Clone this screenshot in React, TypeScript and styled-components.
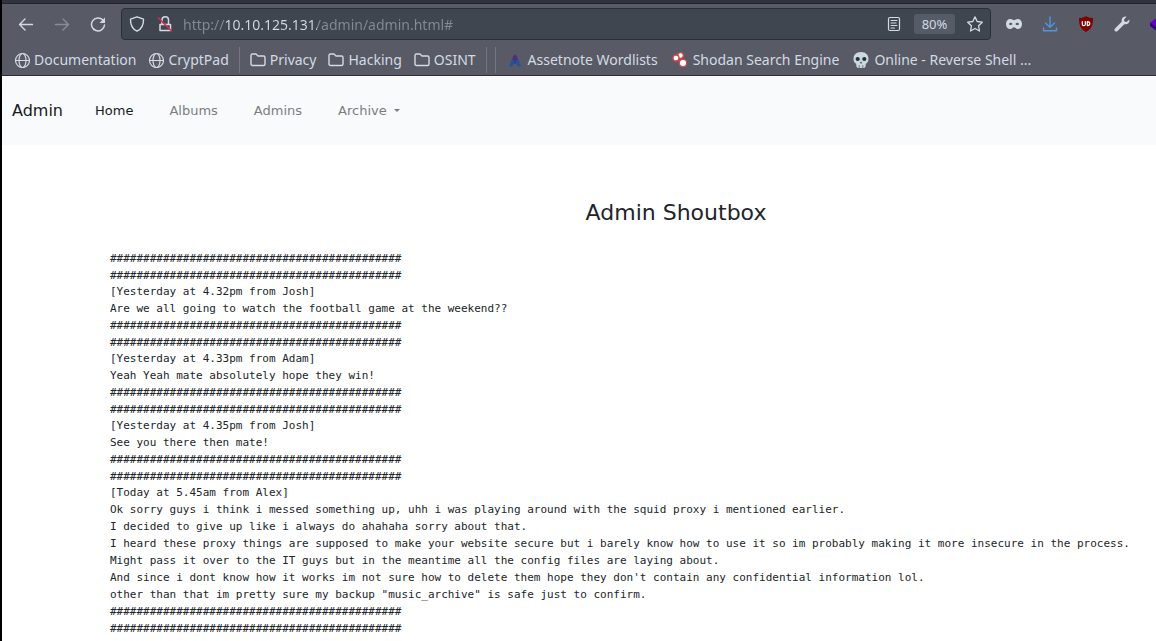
import React from 'react';
import styled, { createGlobalStyle, css } from 'styled-components';

const GlobalStyle = createGlobalStyle`
  *, *::before, *::after { box-sizing: border-box; }
  body { margin: 0; background: #fff; overflow: hidden; }
`;

const uiFont = css`
  font-family: 'Noto Sans', sans-serif;
`;

const Window = styled.div`
  min-height: 100vh;
  border-left: 2px solid #000;
  overflow: hidden;
`;

const Chrome = styled.header`
  ${uiFont}
  color: #d3dae3;
  background: #585a66;
  border-bottom: 1px solid #35283f;
`;

const TabStrip = styled.div`
  height: 4px;
  background: #2f343f;
  border-bottom: 1px solid #1f232b;
`;

const Toolbar = styled.div`
  display: flex;
  align-items: center;
  height: 40px;
  padding-left: 6px;
`;

const ToolButton = styled.button<{ $dim?: boolean; $clipped?: boolean }>`
  display: flex;
  flex: none;
  align-items: center;
  justify-content: ${p => (p.$clipped ? 'flex-start' : 'center')};
  width: ${p => (p.$clipped ? 16 : 36)}px;
  height: 32px;
  padding: 0 0 0 ${p => (p.$clipped ? 10 : 0)}px;
  border: 0;
  background: none;
  color: inherit;
  opacity: ${p => (p.$dim ? 0.4 : 1)};
  overflow: hidden;

  svg { flex: none; }
`;

const AddressBar = styled.form`
  display: flex;
  flex: 1;
  align-items: center;
  min-width: 0;
  height: 32px;
  margin: 0 5px;
  padding: 0 1px;
  border: 1px solid #2a2e39;
  border-radius: 4px;
  background: #3f4650;
`;

const FieldButton = styled.button`
  display: flex;
  flex: none;
  align-items: center;
  justify-content: center;
  width: 28px;
  height: 28px;
  padding: 0;
  border: 0;
  background: none;
  color: inherit;
`;

const AddressInput = styled.input`
  ${uiFont}
  flex: 1;
  min-width: 0;
  height: 28px;
  margin: 0 0 0 4px;
  padding: 0;
  border: 0;
  outline: 0;
  font-size: 14px;
  color: transparent;
  background: linear-gradient(to right, #858a93 41px, #d3dae3 41px 134px, #858a93 134px);
  background-clip: text;
  -webkit-background-clip: text;
`;

const ZoomButton = styled.button`
  ${uiFont}
  flex: none;
  width: 41px;
  height: 20px;
  margin: 0 6px;
  padding: 0;
  border: 0;
  border-radius: 3px;
  background: #565b68;
  color: #d3dae3;
  font-size: 13px;
  line-height: 20px;
`;

const BookmarkBar = styled.nav`
  display: flex;
  align-items: center;
  height: 31px;
  padding-left: 6px;
`;

const Bookmark = styled.a<{ $favicon?: boolean }>`
  display: flex;
  flex: none;
  align-items: center;
  gap: ${p => (p.$favicon ? 5 : 4)}px;
  padding: 0 ${p => (p.$favicon ? 7 : 6)}px;
  color: inherit;
  font-size: 14px;
  line-height: 24px;
  text-decoration: none;
  white-space: nowrap;

  svg { flex: none; }
`;

const BookmarkDivider = styled.span`
  flex: none;
  width: 1px;
  height: 26px;
  margin: 0 4px;
  background: #757683;
`;

const SiteNav = styled.nav`
  display: flex;
  align-items: center;
  min-height: 69px;
  padding: 0 10px;
  background: #f8fafc;
  font-family: 'DejaVu Sans', sans-serif;
`;

const Brand = styled.a`
  margin-right: 14px;
  color: #1a1b1c;
  font-size: 16px;
  line-height: 24px;
  text-decoration: none;
`;

const NavList = styled.ul`
  display: flex;
  margin: 0;
  padding: 0;
  list-style: none;
`;

const NavLink = styled.a<{ $active?: boolean }>`
  display: flex;
  align-items: center;
  gap: 7px;
  padding: 0 18px;
  color: ${p => (p.$active ? '#1a1b1c' : '#7c7d7e')};
  font-size: 13px;
  line-height: 20px;
  text-decoration: none;
`;

const Caret = styled.span`
  border: 3px solid transparent;
  border-top-color: currentColor;
  border-bottom: 0;
`;

const Main = styled.main`
  padding: 52px 0 0 108px;
  color: #212529;
`;

const Title = styled.h1`
  margin: 0 -86px 21px 0;
  font-family: 'DejaVu Sans', sans-serif;
  font-size: 22px;
  font-weight: 400;
  line-height: 32px;
  text-align: center;
`;

const monoText = css`
  font-family: 'DejaVu Sans Mono', monospace;
  font-size: 11px;
  line-height: 17px;
  white-space: pre;
`;

const Message = styled.article`
  ${monoText}
`;

const Rule = styled.div`
  ${monoText}
  margin-bottom: -1px;
`;

const Icon = ({ size = 16, children }: { size?: number; children: React.ReactNode }) => (
  <svg width={size} height={size} viewBox="0 0 16 16" fill="none" stroke="currentColor" strokeWidth="1.2" strokeLinecap="round" strokeLinejoin="round" aria-hidden="true">
    {children}
  </svg>
);

const Back = () => <Icon><path d="M14.5 8.500H1.500M7 3 1.500 8.500 7 14" strokeWidth="1.4" /></Icon>;
const Forward = () => <Icon><path d="M1.500 8.500h13M9 3l5.500 5.500L9 14" strokeWidth="1.4" /></Icon>;
const Reload = () => (
  <Icon>
    <path d="M12.800 4A6.500 6.500 0 1 0 14.500 9" strokeWidth="1.500" />
    <path d="M15 1.500v5.500H9.500z" fill="currentColor" stroke="none" />
  </Icon>
);
const Shield = () => <Icon><path d="M8 .8 14.500 3.200C14.700 8.800 12.500 13 8 15.200 3.500 13 1.300 8.800 1.500 3.200z" strokeWidth="1.400" /></Icon>;
const Lock = () => (
  <Icon>
    <path d="M3 8.500h10.500v6H3zM5 8.500V4a3.200 3.200 0 0 1 6.500 0v4.500" strokeWidth="1.500" />
    <path d="M1.500 2 14.500 15" stroke="#e22850" strokeWidth="1.500" />
  </Icon>
);
const Reader = () => <Icon><rect x="2.500" y="1.500" width="11" height="13" rx="1.500" /><path d="M5 4.500h6M5 7h5M5 9.500h6M5 12h3.500" strokeWidth="1.100" /></Icon>;
const Star = () => <Icon><path d="m8 .9 2.200 4.600 5.100.7-3.700 3.600.9 5.200L8 12.500 3.500 15l.9-5.200L.7 6.200l5.100-.7z" strokeWidth="1.300" /></Icon>;
const Mask = () => (
  <Icon>
    <path fillRule="evenodd" d="M0 8c0-3 1.700-5 4.300-5C6 3 6.800 4.200 8 4.200S10 3 11.700 3C14.300 3 16 5 16 8s-1.700 5-4.300 5c-1.900 0-2.500-1.700-3.700-1.700S6.200 13 4.300 13C1.700 13 0 11 0 8zM3 8c.6 1.600 2.800 1.600 3.600 0C5.800 6.400 3.600 6.400 3 8zM13 8c-.6 1.600-2.800 1.600-3.600 0 .8-1.600 3-1.600 3.600 0z" fill="currentColor" stroke="none" />
  </Icon>
);
const Download = () => <Icon><path d="M8 1v10M3.500 7 8 11.300 12.500 7M1.500 12v2.700h13V12" stroke="#5294e2" strokeWidth="1.400" /></Icon>;
const Blocker = () => (
  <Icon>
    <path d="M8 0c2 1.500 4 2 7 2 0 7-1 10.500-7 14C2 12.500 1 9 1 2c3 0 5-.5 7-2z" fill="#800000" stroke="none" />
    <path d="M4.300 5.500v2.700a1.500 1.500 0 0 0 3 0V5.500M9.300 5.600v4c3.300.2 3.300-4.100 0-4z" stroke="#fff" strokeWidth="1.200" />
  </Icon>
);
const Wrench = () => (
  <Icon>
    <path d="M15.300 3.500 12.600 6 10.400 5.500 10 3.400 12.500.7C10 0 7 2 7.700 5.700L.8 12.800c-1.300 1.500 1 3.700 2.500 2.400l7-7C14 9 16 6 15.300 3.500z" fill="currentColor" stroke="none" />
  </Icon>
);
const Cube = () => (
  <Icon>
    <path d="M0 6.500 8 1l8 5.500L8 12z" fill="#6200c8" stroke="none" />
    <path d="M0 6.500 8 12l8-5.500V10l-8 6-8-6z" fill="#2b0a78" stroke="none" />
  </Icon>
);
const Globe = () => (
  <Icon>
    <circle cx="8.500" cy="8.500" r="7" />
    <ellipse cx="8.500" cy="8.500" rx="3.500" ry="7" />
    <path d="M1.800 8.500h13.400" />
  </Icon>
);
const Folder = () => <Icon><path d="M1 3.500c0-1 .5-1.500 1.500-1.500H6l2 2h5.500c1 0 1.500.5 1.500 1.500V12c0 1-.5 1.500-1.500 1.500h-11C1.500 13.500 1 13 1 12z" strokeWidth="1.400" /></Icon>;
const Assetnote = () => (
  <Icon>
    <path d="M8 2 10 4.500 11.500 9H4.500L6 4.500z" fill="#55307c" stroke="none" />
    <path d="M4.500 8h7l2.500 6.500h-3L9.500 12h-3L5 14.500H2z" fill="#22549c" stroke="none" />
    <path d="M8 5v5.500" stroke="#3b3264" strokeWidth="1" />
  </Icon>
);
const Shodan = () => (
  <Icon>
    <g fill="#fff" stroke="#df4448" strokeWidth="1.300">
      <circle cx="8.500" cy="3.500" r="2.800" />
      <circle cx="4" cy="6" r="3" />
      <circle cx="11" cy="11" r="3.700" />
    </g>
  </Icon>
);
const Skull = () => (
  <Icon>
    <path d="M8 0C3 0 .5 3 .5 7c0 2 .7 3.500 2 4.300.8.500.8 1 .8 2.200 0 1.700 1 2.500 2.200 2.500h5c1.200 0 2.200-.8 2.200-2.500 0-1.200 0-1.700.8-2.200 1.300-.8 2-2.300 2-4.300 0-4-2.500-7-7.500-7z" fill="#ccd8dd" stroke="none" />
    <circle cx="4.700" cy="7" r="2.100" fill="#25313a" stroke="none" />
    <circle cx="11.300" cy="7" r="2.100" fill="#25313a" stroke="none" />
    <path d="M8 9.500 6.800 11.200h2.400z" fill="#25313a" stroke="none" />
    <path d="M6.200 13.500V16M9.800 13.500V16" stroke="#6e7d86" strokeWidth="1" />
  </Icon>
);

const hashes = '#'.repeat(44);

const messages = [
  ['[Yesterday at 4.32pm from Josh]', 'Are we all going to watch the football game at the weekend??'],
  ['[Yesterday at 4.33pm from Adam]', 'Yeah Yeah mate absolutely hope they win!'],
  ['[Yesterday at 4.35pm from Josh]', 'See you there then mate!'],
  [
    '[Today at 5.45am from Alex]',
    'Ok sorry guys i think i messed something up, uhh i was playing around with the squid proxy i mentioned earlier.',
    'I decided to give up like i always do ahahaha sorry about that.',
    'I heard these proxy things are supposed to make your website secure but i barely know how to use it so im probably making it more insecure in the process.',
    'Might pass it over to the IT guys but in the meantime all the config files are laying about.',
    "And since i dont know how it works im not sure how to delete them hope they don't contain any confidential information lol.",
    'other than that im pretty sure my backup "music_archive" is safe just to confirm.',
  ],
];

const Separator = () => <Rule>{`${hashes}\n${hashes}`}</Rule>;

export default function App() {
  return (
    <Window>
      <GlobalStyle />
      <Chrome>
        <TabStrip />
        <Toolbar>
          <ToolButton aria-label="Back"><Back /></ToolButton>
          <ToolButton aria-label="Forward" $dim><Forward /></ToolButton>
          <ToolButton aria-label="Reload"><Reload /></ToolButton>
          <AddressBar onSubmit={e => e.preventDefault()}>
            <FieldButton type="button" aria-label="Tracking protection"><Shield /></FieldButton>
            <FieldButton type="button" aria-label="Connection is not secure"><Lock /></FieldButton>
            <AddressInput aria-label="Address" defaultValue="http://10.10.125.131/admin/admin.html#" spellCheck={false} />
            <FieldButton type="button" aria-label="Reader view"><Reader /></FieldButton>
            <ZoomButton type="button">80%</ZoomButton>
            <FieldButton type="button" aria-label="Bookmark this page"><Star /></FieldButton>
          </AddressBar>
          <ToolButton aria-label="Private mask"><Mask /></ToolButton>
          <ToolButton aria-label="Downloads"><Download /></ToolButton>
          <ToolButton aria-label="Ad blocker"><Blocker /></ToolButton>
          <ToolButton aria-label="Tools"><Wrench /></ToolButton>
          <ToolButton aria-label="Extension" $clipped><Cube /></ToolButton>
        </Toolbar>
        <BookmarkBar aria-label="Bookmarks">
          <Bookmark href="#"><Globe />Documentation</Bookmark>
          <Bookmark href="#"><Globe />CryptPad</Bookmark>
          <BookmarkDivider />
          <Bookmark href="#"><Folder />Privacy</Bookmark>
          <Bookmark href="#"><Folder />Hacking</Bookmark>
          <Bookmark href="#"><Folder />OSINT</Bookmark>
          <BookmarkDivider />
          <BookmarkDivider />
          <Bookmark href="#" $favicon><Assetnote />Assetnote Wordlists</Bookmark>
          <Bookmark href="#" $favicon><Shodan />Shodan Search Engine</Bookmark>
          <Bookmark href="#" $favicon><Skull />Online - Reverse Shell ...</Bookmark>
        </BookmarkBar>
      </Chrome>
      <SiteNav aria-label="Site">
        <Brand href="#">Admin</Brand>
        <NavList>
          <li><NavLink href="#" $active>Home</NavLink></li>
          <li><NavLink href="#">Albums</NavLink></li>
          <li><NavLink href="#">Admins</NavLink></li>
          <li><NavLink href="#">Archive<Caret /></NavLink></li>
        </NavList>
      </SiteNav>
      <Main>
        <Title>Admin Shoutbox</Title>
        <Separator />
        {messages.map(lines => (
          <React.Fragment key={lines[0]}>
            <Message>{lines.join('\n')}</Message>
            <Separator />
          </React.Fragment>
        ))}
      </Main>
    </Window>
  );
}
